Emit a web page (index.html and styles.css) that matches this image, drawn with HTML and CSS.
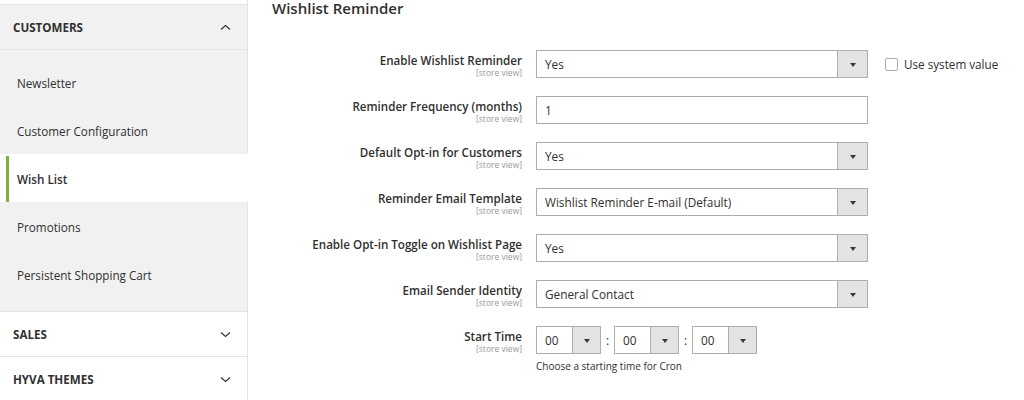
FILE: index.html
```html
<!DOCTYPE html>
<html>
<head>
<meta charset="utf-8">
<link rel="stylesheet" href="styles.css">
</head>
<body>
<div class="page">
  <aside class="nav">
    <div class="nav-top"></div>
    <div class="nav-section open">
      <div class="nav-title"><span>CUSTOMERS</span>
        <svg class="chev" width="11" height="7" viewBox="0 0 11 7"><path d="M1 5.5 L5.5 1.5 L10 5.5" fill="none" stroke="#303030" stroke-width="1.1"/></svg>
      </div>
      <ul class="nav-items">
        <li class="nav-item"><span class="nav-link">Newsletter</span></li>
        <li class="nav-item"><span class="nav-link">Customer Configuration</span></li>
        <li class="nav-item active"><span class="nav-link">Wish List</span></li>
        <li class="nav-item"><span class="nav-link">Promotions</span></li>
        <li class="nav-item"><span class="nav-link">Persistent Shopping Cart</span></li>
      </ul>
    </div>
    <div class="nav-section">
      <div class="nav-title"><span>SALES</span>
        <svg class="chev" width="11" height="7" viewBox="0 0 11 7"><path d="M1 1.5 L5.5 5.5 L10 1.5" fill="none" stroke="#303030" stroke-width="1.1"/></svg>
      </div>
    </div>
    <div class="nav-section">
      <div class="nav-title"><span>HYVA THEMES</span>
        <svg class="chev" width="11" height="7" viewBox="0 0 11 7"><path d="M1 1.5 L5.5 5.5 L10 1.5" fill="none" stroke="#303030" stroke-width="1.1"/></svg>
      </div>
    </div>
  </aside>
  <main class="main">
    <h2 class="section-title">Wishlist Reminder</h2>
    <div class="form">
      <div class="row">
        <div class="label"><div class="label-text">Enable Wishlist Reminder</div><div class="scope">[store view]</div></div>
        <div class="control"><div class="select"><span class="value">Yes</span><span class="arrow"></span></div></div>
        <label class="use-default"><span class="checkbox"></span>Use system value</label>
      </div>
      <div class="row">
        <div class="label"><div class="label-text">Reminder Frequency (months)</div><div class="scope">[store view]</div></div>
        <div class="control"><div class="input"><span class="value">1</span></div></div>
      </div>
      <div class="row">
        <div class="label"><div class="label-text">Default Opt-in for Customers</div><div class="scope">[store view]</div></div>
        <div class="control"><div class="select"><span class="value">Yes</span><span class="arrow"></span></div></div>
      </div>
      <div class="row">
        <div class="label"><div class="label-text">Reminder Email Template</div><div class="scope">[store view]</div></div>
        <div class="control"><div class="select"><span class="value">Wishlist Reminder E-mail (Default)</span><span class="arrow"></span></div></div>
      </div>
      <div class="row">
        <div class="label"><div class="label-text">Enable Opt-in Toggle on Wishlist Page</div><div class="scope">[store view]</div></div>
        <div class="control"><div class="select"><span class="value">Yes</span><span class="arrow"></span></div></div>
      </div>
      <div class="row">
        <div class="label"><div class="label-text">Email Sender Identity</div><div class="scope">[store view]</div></div>
        <div class="control"><div class="select"><span class="value">General Contact</span><span class="arrow"></span></div></div>
      </div>
      <div class="row">
        <div class="label"><div class="label-text">Start Time</div><div class="scope">[store view]</div></div>
        <div class="control">
          <div class="time">
            <div class="select small"><span class="value">00</span><span class="arrow"></span></div>
            <span class="colon">:</span>
            <div class="select small"><span class="value">00</span><span class="arrow"></span></div>
            <span class="colon">:</span>
            <div class="select small"><span class="value">00</span><span class="arrow"></span></div>
          </div>
          <div class="note">Choose a starting time for Cron</div>
        </div>
      </div>
    </div>
  </main>
</div>
</body>
</html>
```

FILE: styles.css
```css
* { box-sizing: border-box; }
html, body { margin: 0; padding: 0; background: #fff; }
body {
  font-family: "Open Sans", "Liberation Sans", sans-serif;
  color: #303030;
  width: 1024px;
  height: 400px;
  overflow: hidden;
}
.page { display: flex; align-items: flex-start; }

/* sidebar */
.nav { width: 248px; flex: none; }
.nav-top {
  height: 5px;
  border-right: 1px solid #e3e3e3;
  border-bottom: 1px solid #e3e3e3;
}
.nav-section {
  border-right: 1px solid #e3e3e3;
  border-bottom: 1px solid #e3e3e3;
  background: #fff;
}
.nav-section.open { background: #f1f1f1; }
.nav-title {
  height: 44px;
  display: flex;
  align-items: center;
  justify-content: space-between;
  padding: 1px 16px 0 13px;
  font-size: 11.6px;
  font-weight: 700;
  color: #303030;
}
.nav-section.open .nav-title {
  height: 45px;
  border-bottom: 1px solid #e3e3e3;
}
.chev { display: block; }
.nav-items {
  list-style: none;
  margin: 0;
  padding: 8px 0 13px;
}
.nav-item {
  height: 48px;
  display: flex;
  align-items: center;
  padding-left: 6px;
  padding-top: 1px;
  font-size: 11.7px;
  color: #303030;
}
.nav-link {
  display: flex;
  align-items: center;
  height: 100%;
  border-left: 3px solid transparent;
  padding-left: 8px;
}
.nav-item.active {
  background: #fff;
  margin-right: -1px;
  font-weight: 600;
  padding-top: 2px;
}
.nav-item.active .nav-link { border-left-color: #7bb13a; }

/* main */
.main { flex: 1; padding-left: 24px; }
.section-title {
  margin: -2px 0 0;
  font-size: 15px;
  line-height: 20px;
  font-weight: 600;
  color: #303030;
}
.form { padding-top: 32px; }
.row {
  display: grid;
  grid-template-columns: 250px 332px auto;
  column-gap: 14px;
  margin-bottom: 18px;
  align-items: start;
}
.label { text-align: right; padding-top: 3px; }
.label-text {
  font-size: 11.6px;
  font-weight: 600;
  line-height: 15px;
  color: #303030;
}
.scope {
  font-size: 8.5px;
  line-height: 10px;
  color: #999;
}
.select, .input {
  display: flex;
  align-items: center;
  height: 28px;
  border: 1px solid #adadad;
  background: #fff;
  font-size: 11.8px;
  color: #303030;
}
.value { flex: 1; padding-left: 8px; }
.arrow {
  width: 30px;
  height: 100%;
  flex: none;
  background: #e3e3e3;
  border-left: 1px solid #adadad;
  position: relative;
}
.arrow::after {
  content: "";
  position: absolute;
  left: 50%;
  top: 50%;
  margin: -1px 0 0 -3px;
  border-left: 3px solid transparent;
  border-right: 3px solid transparent;
  border-top: 4px solid #41362f;
}
.use-default {
  display: flex;
  align-items: center;
  margin-left: 3px;
  height: 28px;
  font-size: 11.7px;
  color: #303030;
}
.checkbox {
  width: 13px;
  height: 13px;
  border: 1px solid #adadad;
  border-radius: 2px;
  margin-right: 6px;
  background: #fff;
}
.time { display: flex; align-items: center; }
.select.small { width: 65px; }
.select.small .arrow { width: 28px; }
.colon {
  font-size: 12px;
  width: 13px;
  text-align: center;
}
.note {
  font-size: 10px;
  color: #303030;
  margin-top: 5px;
}
```
